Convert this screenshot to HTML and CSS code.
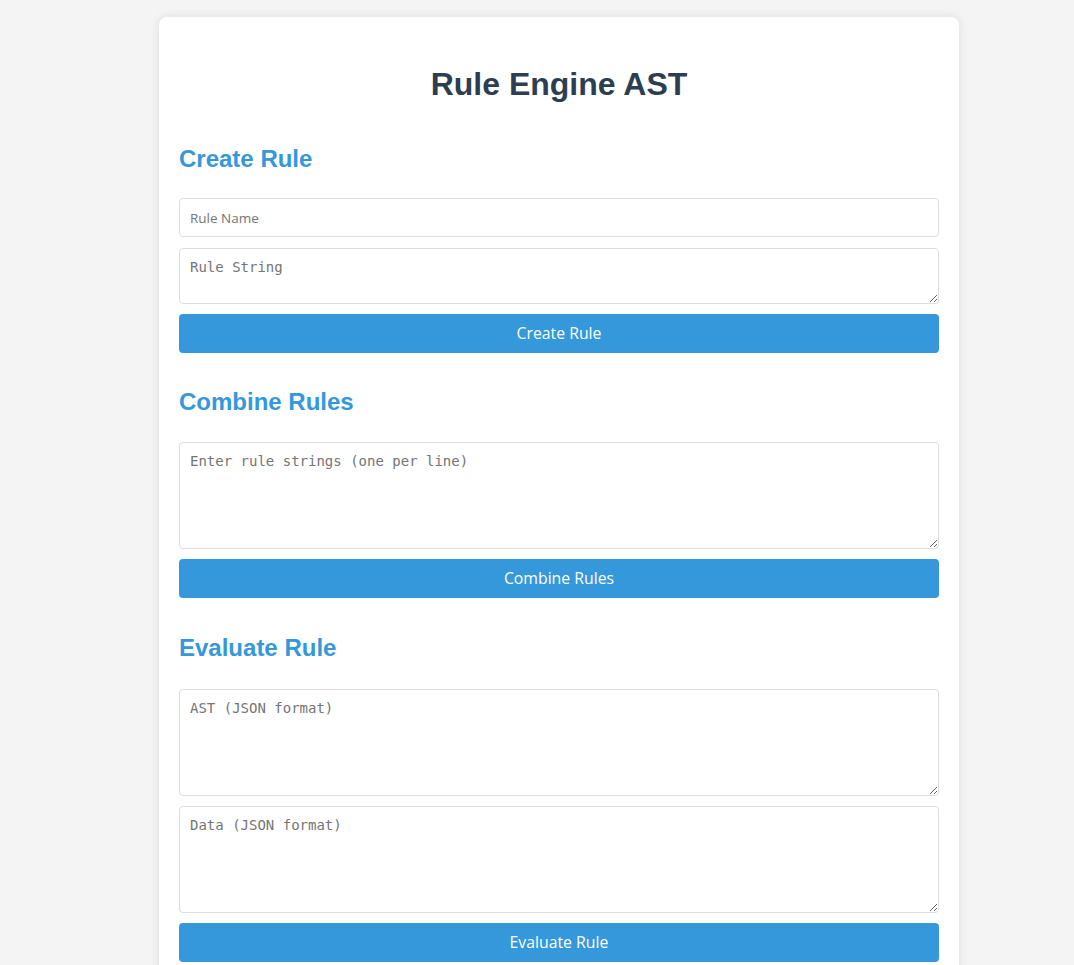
FILE: index.html
```html
<!DOCTYPE html>
<html lang="en">
<head>
<meta charset="utf-8">
<title>Rule Engine AST</title>
<link rel="stylesheet" href="styles.css">
</head>
<body>
<div class="container">
  <h1 class="title">Rule Engine AST</h1>

  <section class="section">
    <h2 class="section-title section-title-first">Create Rule</h2>
    <input class="field" type="text" placeholder="Rule Name">
    <textarea class="area area-small" placeholder="Rule String"></textarea>
    <button class="btn" type="button">Create Rule</button>
  </section>

  <section class="section">
    <h2 class="section-title">Combine Rules</h2>
    <textarea class="area area-large" placeholder="Enter rule strings (one per line)"></textarea>
    <button class="btn" type="button">Combine Rules</button>
  </section>

  <section class="section">
    <h2 class="section-title section-title-last">Evaluate Rule</h2>
    <textarea class="area area-large" placeholder="AST (JSON format)"></textarea>
    <textarea class="area area-large" placeholder="Data (JSON format)"></textarea>
    <button class="btn" type="button">Evaluate Rule</button>
  </section>
</div>
</body>
</html>
```

FILE: styles.css
```css
html, body {
  margin: 0;
  background: #f4f4f4;
}

body {
  padding: 17px 0 20px 44px;
  font-family: "Liberation Sans", Arial, sans-serif;
}

.container {
  width: 800px;
  box-sizing: border-box;
  margin: 0 auto;
  padding: 1px 20px 20px;
  background: #ffffff;
  border-radius: 8px;
  box-shadow: 0 0 10px rgba(0, 0, 0, 0.1);
}

.title {
  margin: 48px 0 42px;
  font-size: 32px;
  line-height: 37px;
  font-weight: bold;
  text-align: center;
  color: #2c3e50;
}

.section {
  display: flex;
  flex-direction: column;
  margin-bottom: 35px;
}

.section-title {
  margin: 0 0 26px;
  font-size: 24px;
  line-height: 28px;
  font-weight: bold;
  color: #3498db;
}

.section-title-first {
  margin-bottom: 25px;
}

.section-title-last {
  margin-top: 1px;
  margin-bottom: 27px;
}

.field,
.area {
  box-sizing: border-box;
  width: 100%;
  margin: 0 0 10px;
  padding: 10px;
  border: 1px solid #dddddd;
  border-radius: 4px;
  background: #fff;
  color: #333;
}

.field {
  height: 39px;
  margin-bottom: 11px;
  font-family: "Open Sans", "Noto Sans", sans-serif;
  font-size: 13.5px;
}

.area {
  font-family: "DejaVu Sans Mono", monospace;
  font-size: 14px;
  line-height: 17px;
  resize: both;
}

.field::placeholder,
.area::placeholder {
  color: #757575;
}

.area-small {
  height: 56px;
}

.area-large {
  height: 107px;
}

.btn {
  box-sizing: border-box;
  width: 100%;
  height: 39px;
  padding: 0 10px 2px;
  border: none;
  border-radius: 4px;
  background: #3498db;
  color: #ffffff;
  font-family: "Open Sans", "Noto Sans", sans-serif;
  font-size: 15.8px;
  cursor: pointer;
}
```
